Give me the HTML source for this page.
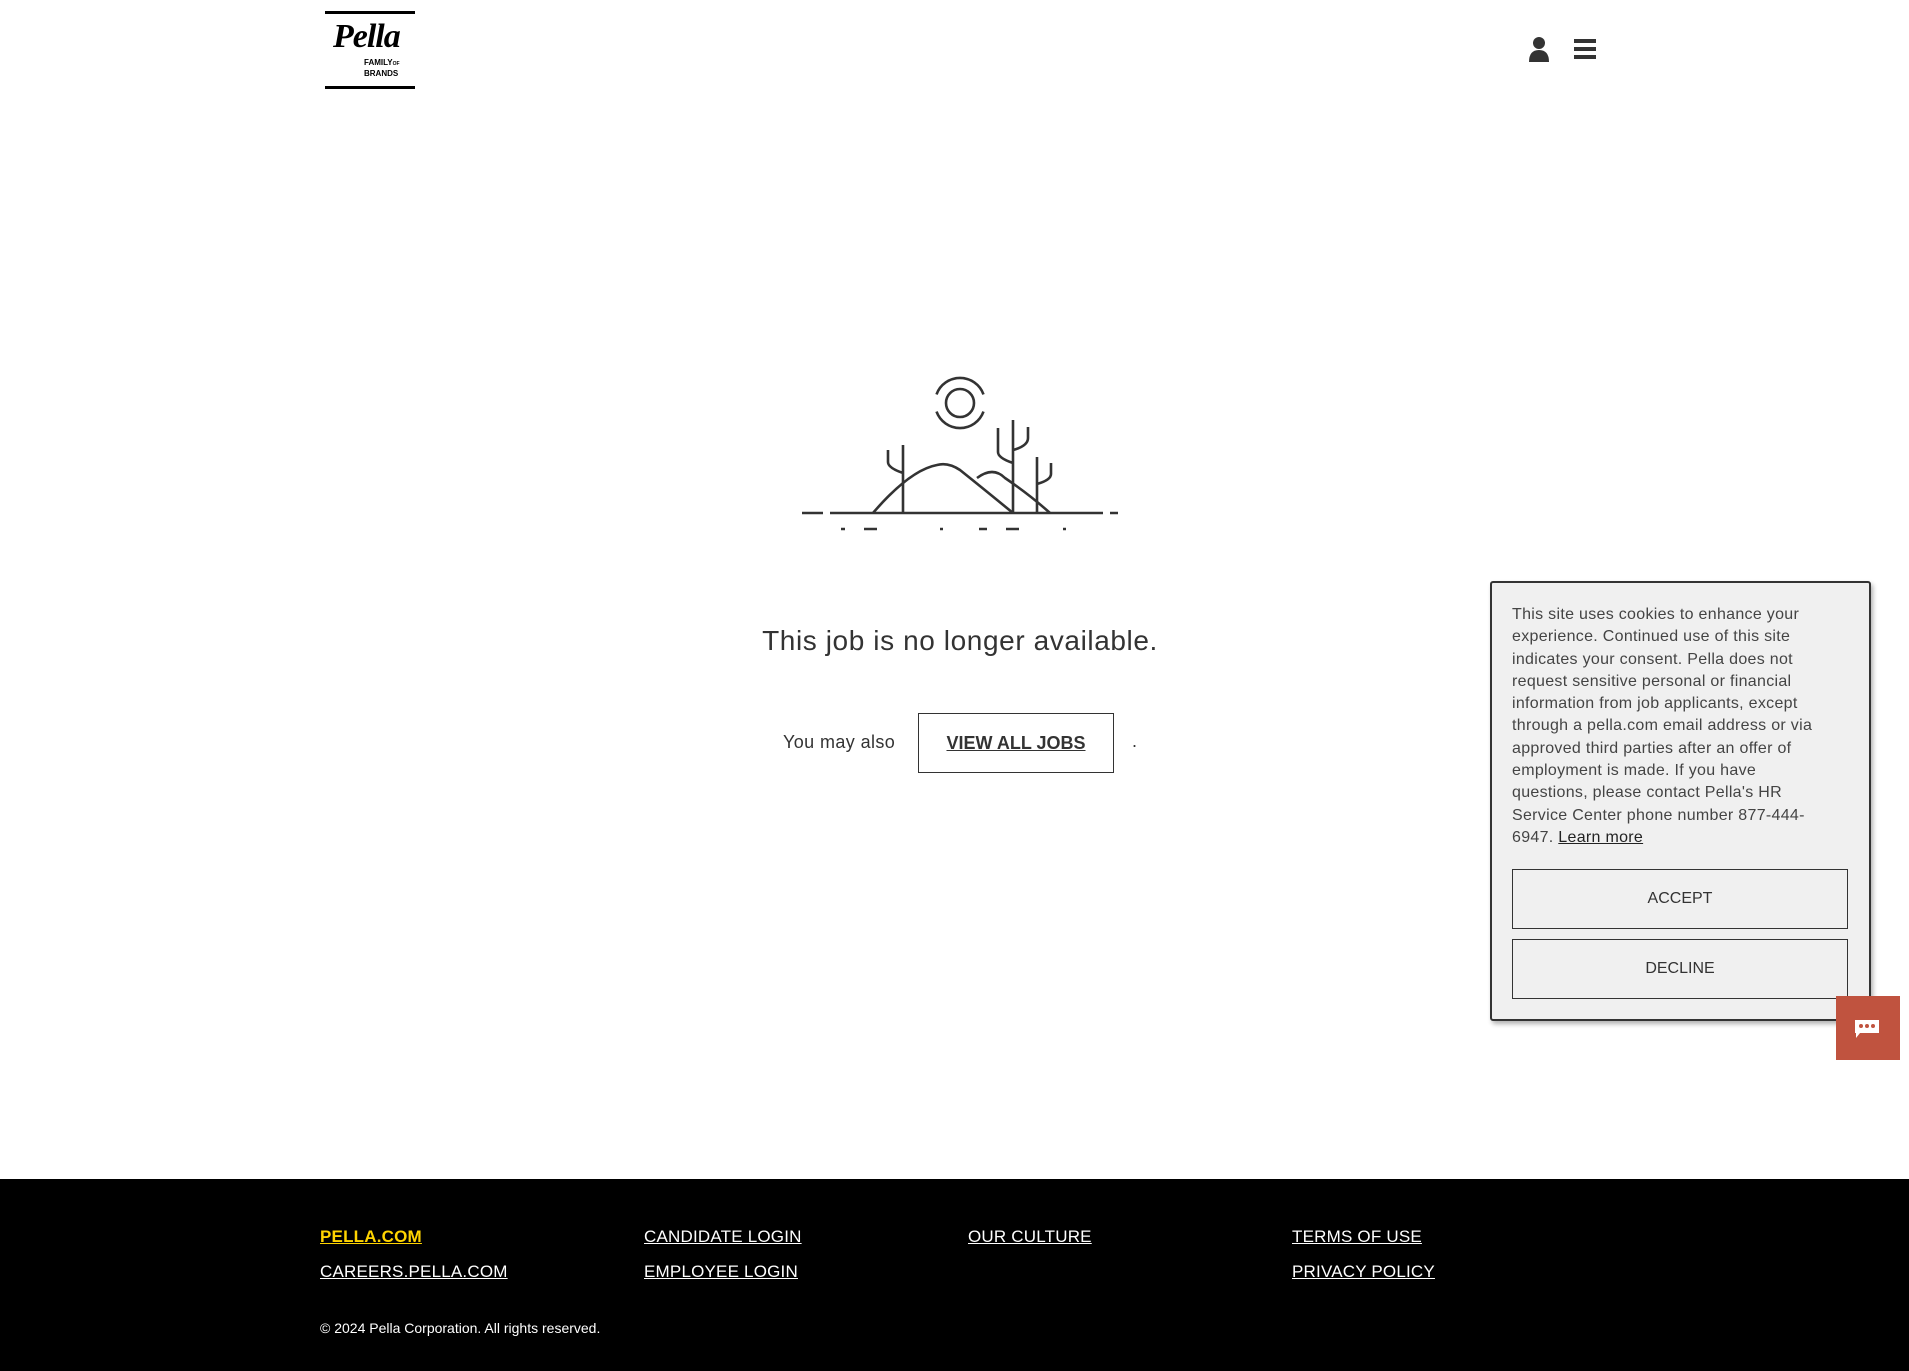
<!DOCTYPE html>
<html><head><meta charset="utf-8"><style>
*{margin:0;padding:0;box-sizing:border-box}
body{width:1909px;height:1371px;position:relative;background:#fff;font-family:"Liberation Sans",sans-serif;color:#333;overflow:hidden}
.abs{position:absolute}
.footer{position:absolute;left:0;top:1179px;width:1909px;height:192px;background:#000}
.footer a{position:absolute;color:#fff;font-size:17px;letter-spacing:0.2px;text-decoration:underline;white-space:nowrap}
.btn{position:absolute;border:1px solid #333;background:#f0f0f0;text-align:center;font-size:16px;color:#333}
</style></head><body>
<div class="abs" style="left:325px;top:11px;width:90px;height:3px;background:#000"></div>
<div class="abs" style="left:325px;top:86px;width:90px;height:3px;background:#000"></div>
<div class="abs" style="left:333px;top:18px;font-family:'Liberation Serif',serif;font-style:italic;font-weight:bold;font-size:34px;color:#000;letter-spacing:-1px">Pella</div>
<div class="abs" style="left:364px;top:58px;font-size:8px;font-weight:bold;color:#000;line-height:9px">FAMILY<span style="font-size:5px">OF</span><br>BRANDS</div>
<svg class="abs" style="left:1528px;top:36px" width="22" height="27" viewBox="0 0 22 27"><circle cx="11" cy="7" r="6" fill="#333"/><path d="M1 26 Q1 14 11 14 Q21 14 21 26Z" fill="#333"/></svg>
<svg class="abs" style="left:1574px;top:38px" width="22" height="22"><rect y="1" width="22" height="4" fill="#333"/><rect y="9" width="22" height="4" fill="#333"/><rect y="17" width="22" height="4" fill="#333"/></svg>
<svg class="abs" style="left:790px;top:360px" width="340" height="180" viewBox="790 360 340 180" fill="none" stroke="#333" stroke-width="2.6">
<circle cx="960" cy="403" r="14"/>
<path d="M936.5 394.4 A25 25 0 0 1 983.5 394.4 M936.5 411.6 A25 25 0 0 0 983.5 411.6"/>
<path d="M802 513H823 M830 513H1103 M1110 513H1118"/>
<path d="M873 513 Q910 470 937 465 Q948 462 960 470 Q985 490 1013 513"/>
<path d="M977 478 Q993 466 1005 478 Q1030 495 1050 513"/>
<path d="M903 445V513 M888 450V462 Q888 468 903 473"/>
<path d="M1013 420V513 M998 428V452 Q998 458 1013 463 M1028 427V438 Q1028 446 1013 450"/>
<path d="M1037 457V513 M1051 463V474 Q1051 480 1037 484"/>
<path d="M841 529H845 M864 529H877 M940 529H943 M979 529H987 M1006 529H1019 M1063 529H1066"/>
</svg>
<div class="abs" style="left:0;width:1920px;top:625px;text-align:center;font-size:28px;letter-spacing:0.6px;color:#333">This job is no longer available.</div>
<div class="abs" style="left:783px;top:732px;font-size:18px;letter-spacing:0.4px">You may also</div>
<div class="abs" style="left:918px;top:713px;width:196px;height:60px;border:1px solid #333;text-align:center;line-height:58px;font-size:18px;font-weight:bold;text-decoration:underline">VIEW ALL JOBS</div>
<div class="abs" style="left:1132px;top:731px;font-size:18px">.</div>
<div class="abs" style="left:1490px;top:581px;width:381px;height:440px;background:#f0f0f0;border:2px solid #333;border-radius:3px;box-shadow:2px 3px 5px rgba(0,0,0,.3)"></div>
<div class="abs" style="left:1512px;top:604px;width:345px;font-size:16px;line-height:22.3px;color:#444;letter-spacing:0.3px;white-space:nowrap">This site uses cookies to enhance your<br>experience. Continued use of this site<br>indicates your consent. Pella does not<br>request sensitive personal or financial<br>information from job applicants, except<br>through a pella.com email address or via<br>approved third parties after an offer of<br>employment is made. If you have<br>questions, please contact Pella's HR<br>Service Center phone number 877-444-<br>6947. <u style="color:#222">Learn more</u></div>
<div class="btn" style="left:1512px;top:869px;width:336px;height:60px;line-height:58px">ACCEPT</div>
<div class="btn" style="left:1512px;top:939px;width:336px;height:60px;line-height:58px">DECLINE</div>
<div class="abs" style="left:1836px;top:996px;width:64px;height:64px;background:#c0533f"></div>
<svg class="abs" style="left:1855px;top:1020px" width="24" height="20"><path d="M0 0H24V13H5L1 18V13H0Z" fill="#fff"/><circle cx="6" cy="6" r="2" fill="#c0533f"/><circle cx="12" cy="6" r="2" fill="#c0533f"/><circle cx="18" cy="6" r="2" fill="#c0533f"/></svg>
<div class="footer">
<a style="left:320px;top:48px;color:#ffd400;font-weight:bold">PELLA.COM</a>
<a style="left:320px;top:83px">CAREERS.PELLA.COM</a>
<a style="left:644px;top:48px">CANDIDATE LOGIN</a>
<a style="left:644px;top:83px">EMPLOYEE LOGIN</a>
<a style="left:968px;top:48px">OUR CULTURE</a>
<a style="left:1292px;top:48px">TERMS OF USE</a>
<a style="left:1292px;top:83px">PRIVACY POLICY</a>
<div style="position:absolute;left:320px;top:141px;color:#fff;font-size:14px">© 2024 Pella Corporation. All rights reserved.</div>
</div>
</body></html>
